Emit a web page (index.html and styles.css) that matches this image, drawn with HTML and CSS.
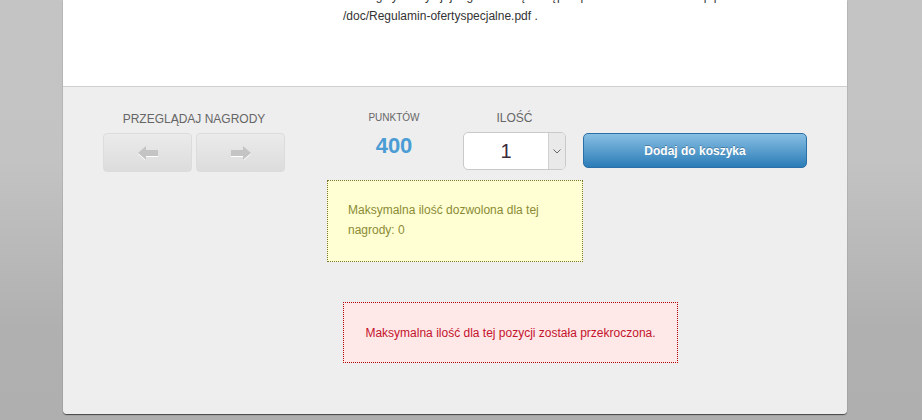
FILE: index.html
```html
<!DOCTYPE html>
<html lang="pl">
<head>
<meta charset="utf-8">
<title>Nagroda</title>
<link rel="stylesheet" href="styles.css">
</head>
<body>
<div class="panel">
  <div class="info">
    <p class="terms">Szczegóły oferty i jej regulamin są dostępne pod adresem www.sklep.pl<br>/doc/Regulamin-ofertyspecjalne.pdf .</p>
  </div>
  <div class="order">
    <div class="browse">
      <div class="label">PRZEGLĄDAJ NAGRODY</div>
      <div class="arrows">
        <button class="arrow" type="button" aria-label="Poprzednia">
          <svg width="20" height="14" viewBox="0 0 20 14"><polygon points="0,7 8,0 8,4 20,4 20,10 8,10 8,14" fill="#fff" transform="translate(0,1)"/><polygon points="0,7 8,0 8,4 20,4 20,10 8,10 8,14" fill="#c4c4c4"/></svg>
        </button>
        <button class="arrow" type="button" aria-label="Następna">
          <svg width="20" height="14" viewBox="0 0 20 14"><polygon points="20,7 12,0 12,4 0,4 0,10 12,10 12,14" fill="#fff" transform="translate(0,1)"/><polygon points="20,7 12,0 12,4 0,4 0,10 12,10 12,14" fill="#c4c4c4"/></svg>
        </button>
      </div>
    </div>
    <div class="main">
      <div class="controls">
        <div class="points">
          <div class="label small">PUNKTÓW</div>
          <div class="value">400</div>
        </div>
        <div class="qty">
          <div class="label">ILOŚĆ</div>
          <div class="select">
            <span class="select-value">1</span>
            <span class="select-btn"><svg width="8" height="5" viewBox="0 0 8 5"><polyline points="0.5,0.5 4,4 7.5,0.5" fill="none" stroke="#666" stroke-width="1"/></svg></span>
          </div>
        </div>
        <button class="add" type="button">Dodaj do koszyka</button>
      </div>
      <div class="note">Maksymalna ilość dozwolona dla tej nagrody: 0</div>
      <div class="error">Maksymalna ilość dla tej pozycji została przekroczona.</div>
    </div>
  </div>
</div>
</body>
</html>
```
FILE: styles.css
```css
html, body {
  margin: 0;
  padding: 0;
}
body {
  height: 420px;
  overflow: hidden;
  background: linear-gradient(#c4c4c4 0, #c3c3c3 160px, #b0b0b0 330px, #afafaf 100%);
  font-family: "Liberation Sans", Arial, sans-serif;
  font-size: 12px;
  color: #333;
}
.panel {
  width: 784px;
  margin-left: 63px;
  border-radius: 0 0 4px 4px;
  box-shadow: 0 1px 1px #444;
}
.info {
  height: 86px;
  background: #fff;
  border-bottom: 1px solid #cfcfcf;
  overflow: hidden;
}
.terms {
  margin: -14px 0 0 280px;
  line-height: 20px;
  color: #333;
  white-space: nowrap;
}
.order {
  display: flex;
  align-items: flex-start;
  background: #eee;
  padding: 23px 0 51px 0;
  border-radius: 0 0 4px 4px;
}
.label {
  text-align: center;
  line-height: 16px;
  font-size: 12px;
  color: #666;
}
.label.small {
  font-size: 10px;
}
.browse {
  width: 182px;
  margin: 1px 0 0 40px;
}
.arrows {
  display: flex;
  gap: 4px;
  margin-top: 6px;
}
.arrow {
  width: 89px;
  height: 39px;
  padding: 0;
  border: 1px solid #dcdcdc;
  border-radius: 4px;
  background: linear-gradient(#ebebeb, #dcdcdc);
  display: flex;
  align-items: center;
  justify-content: center;
}
.arrow svg {
  display: block;
}
.main {
  margin-left: 42px;
}
.controls {
  display: flex;
  align-items: flex-start;
}
.points {
  width: 134px;
  text-align: center;
}
.value {
  margin-top: 8px;
  line-height: 24px;
  font-size: 22px;
  font-weight: bold;
  color: #4a9cd4;
}
.qty {
  width: 103px;
  margin-left: 2px;
}
.select {
  display: flex;
  height: 38px;
  margin-top: 6px;
  box-sizing: border-box;
  border: 1px solid #c9c9c9;
  border-radius: 5px;
  background: #fff;
  overflow: hidden;
}
.select-value {
  flex: 1;
  text-align: center;
  line-height: 36px;
  font-size: 20px;
  color: #3a2c3a;
}
.select-btn {
  width: 16px;
  border-left: 1px solid #cfcfcf;
  background: #e9e9e9;
  display: flex;
  align-items: center;
  justify-content: center;
}
.select-btn svg {
  display: block;
}
.add {
  width: 224px;
  height: 35px;
  margin: 23px 0 0 17px;
  padding: 0;
  border: 1px solid #2a6fa6;
  border-radius: 5px;
  background: linear-gradient(#88bfe3, #2b7cb8);
  color: #fff;
  font-family: "Liberation Sans", Arial, sans-serif;
  font-size: 12px;
  font-weight: bold;
  text-shadow: 0 -1px 0 rgba(0, 0, 0, 0.25);
}
.note {
  width: 256px;
  box-sizing: border-box;
  margin-top: 10px;
  padding: 19px 20px 21px 20px;
  border: 1px dotted #77772a;
  background: #ffffd3;
  color: #8a8a34;
  line-height: 20px;
}
.error {
  width: 335px;
  box-sizing: border-box;
  margin: 40px 0 0 16px;
  padding: 20px 0 19px 0;
  border: 1px dotted #b30000;
  background: #ffe8e8;
  color: #c4132c;
  line-height: 20px;
  text-align: center;
}
```
